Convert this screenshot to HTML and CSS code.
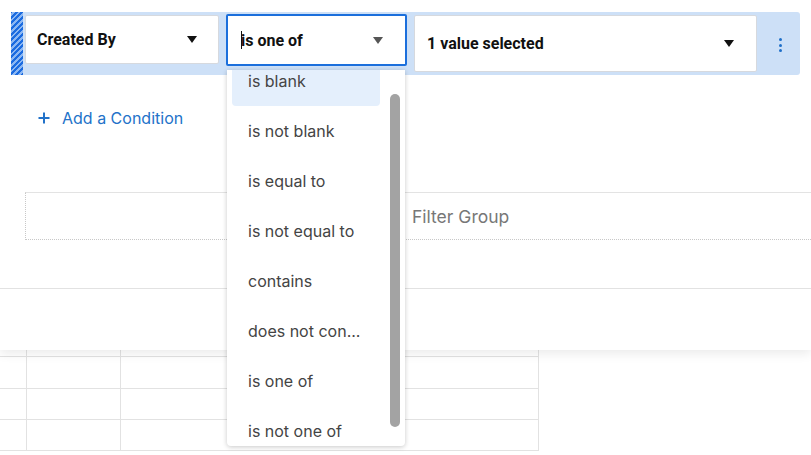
FILE: index.html
```html
<!DOCTYPE html>
<html>
<head>
<meta charset="utf-8">
<link rel="stylesheet" href="styles.css">
</head>
<body>
<div class="panel">
  <div class="filter-row">
    <div class="stripe"></div>
    <div class="select field-select">
      <span class="label">Created By</span>
      <span class="caret"></span>
    </div>
    <div class="select op-select">
      <span class="cursor"></span><span class="label">is one of</span>
      <span class="caret gray"></span>
    </div>
    <div class="select value-select">
      <span class="label">1 value selected</span>
      <span class="caret"></span>
    </div>
    <div class="kebab"><i></i><i></i><i></i></div>
  </div>

  <div class="add-condition">
    <svg class="plus" width="12" height="12" viewBox="0 0 12 12"><path d="M6 0.5v11M0.5 6h11" stroke="#2272c9" stroke-width="2"/></svg>
    <span>Add a Condition</span>
  </div>

  <div class="group-box">
    <span class="group-label">Filter Group</span>
  </div>

  <div class="panel-footer"></div>
</div>

<div class="grid">
  <div class="grid-row head"><div class="c c1"></div><div class="c c2"></div><div class="c c3"></div></div>
  <div class="grid-row"><div class="c c1"></div><div class="c c2"></div><div class="c c3"></div></div>
  <div class="grid-row"><div class="c c1"></div><div class="c c2"></div><div class="c c3"></div></div>
  <div class="grid-row"><div class="c c1"></div><div class="c c2"></div><div class="c c3"></div></div>
</div>

<div class="dropdown">
  <ul class="options">
    <li class="active">is blank</li>
    <li>is not blank</li>
    <li>is equal to</li>
    <li>is not equal to</li>
    <li>contains</li>
    <li>does not con...</li>
    <li>is one of</li>
    <li>is not one of</li>
  </ul>
  <div class="scrollbar"></div>
</div>
</body>
</html>
```

FILE: styles.css
```css
* { box-sizing: border-box; }

html, body {
  margin: 0;
  padding: 0;
  background: #fff;
  width: 811px;
  height: 455px;
  overflow: hidden;
  font-family: Roboto, "Liberation Sans", sans-serif;
}

.panel {
  position: relative;
  z-index: 2;
  background: #fff;
  padding-top: 12px;
  box-shadow: 0 4px 10px rgba(0, 0, 0, 0.08);
}

.filter-row {
  display: flex;
  align-items: flex-start;
  margin-left: 11px;
  width: 789px;
  height: 63px;
  background: #cde0f7;
  border-radius: 0 3px 3px 0;
}

.stripe {
  width: 12px;
  height: 63px;
  background: repeating-linear-gradient(-45deg, #1b6be0 0, #1b6be0 2px, #8cb7f2 2px, #8cb7f2 4px);
}

.select {
  display: flex;
  align-items: center;
  justify-content: space-between;
  background: #fff;
  border: 1px solid #d6d9de;
  border-radius: 2px;
  color: #111;
  font-weight: 700;
  font-size: 16px;
}

.field-select {
  margin-left: 2px;
  margin-top: 3px;
  width: 194px;
  height: 49px;
  padding: 0 21px 0 11px;
}

.op-select {
  margin-left: 7px;
  margin-top: 2px;
  width: 181px;
  height: 52px;
  border: 2px solid #1b6fdc;
  padding: 0 22px 0 13px;
  justify-content: flex-start;
}

.op-select .caret { margin-left: auto; }

.cursor {
  display: inline-block;
  width: 1px;
  height: 18px;
  background: #111;
  margin-right: -1px;
}

.value-select {
  margin-left: 7px;
  margin-top: 3px;
  width: 343px;
  height: 57px;
  padding: 0 22px 0 12px;
}

.caret {
  width: 0;
  height: 0;
  border-left: 5px solid transparent;
  border-right: 5px solid transparent;
  border-top: 7px solid #111;
}

.caret.gray { border-top-color: #555; }

.kebab {
  display: flex;
  flex-direction: column;
  align-items: center;
  gap: 2.5px;
  margin-left: 22px;
  margin-top: 26px;
}

.kebab i {
  display: block;
  width: 3px;
  height: 3px;
  border-radius: 50%;
  background: #1f6fc8;
}

.add-condition {
  display: flex;
  align-items: center;
  gap: 12px;
  margin-top: 25px;
  margin-left: 38px;
  height: 36px;
  color: #2272c9;
  font-family: Inter, Roboto, sans-serif;
  font-size: 16px;
}

.group-box {
  margin-top: 56px;
  margin-left: 25px;
  width: 800px;
  height: 48px;
  border-top: 1px solid #e3e3e3;
  border-left: 1px dotted #c8c8c8;
  border-bottom: 1px dotted #c8c8c8;
  display: flex;
  align-items: center;
  padding-left: 386px;
}

.group-label {
  color: #777;
  font-family: Inter, Roboto, sans-serif;
  font-size: 17.5px;
}

.panel-footer {
  margin-top: 48px;
  height: 62px;
  border-top: 1px solid #e2e2e2;
}

.grid {
  width: 539px;
}

.grid-row {
  display: flex;
  height: 32px;
  border-bottom: 1px solid #e2e2e2;
}

.grid-row.head { height: 7px; }
.grid-row:nth-child(3), .grid-row:nth-child(4) { height: 31px; }

.c { height: 100%; border-right: 1px solid #e2e2e2; }
.c1 { width: 27px; }
.c2 { width: 94px; }
.c3 { width: 418px; }

.dropdown {
  position: absolute;
  z-index: 5;
  left: 227px;
  top: 70px;
  width: 178px;
  height: 376px;
  background: #fff;
  border-radius: 0 0 4px 4px;
  box-shadow: 0 1px 5px rgba(0, 0, 0, 0.22);
  overflow: hidden;
}

.options {
  list-style: none;
  margin: -14px 0 0 0;
  padding: 0 25px 0 5px;
}

.options li {
  height: 50px;
  line-height: 50px;
  padding-left: 16px;
  color: #444;
  font-family: Inter, Roboto, sans-serif;
  font-size: 16px;
  border-radius: 4px;
  white-space: nowrap;
}

.options li.active { background: #e4effc; }

.scrollbar {
  position: absolute;
  left: 163px;
  top: 24px;
  width: 10px;
  height: 333px;
  background: #a3a3a3;
  border-radius: 5px;
}
```
